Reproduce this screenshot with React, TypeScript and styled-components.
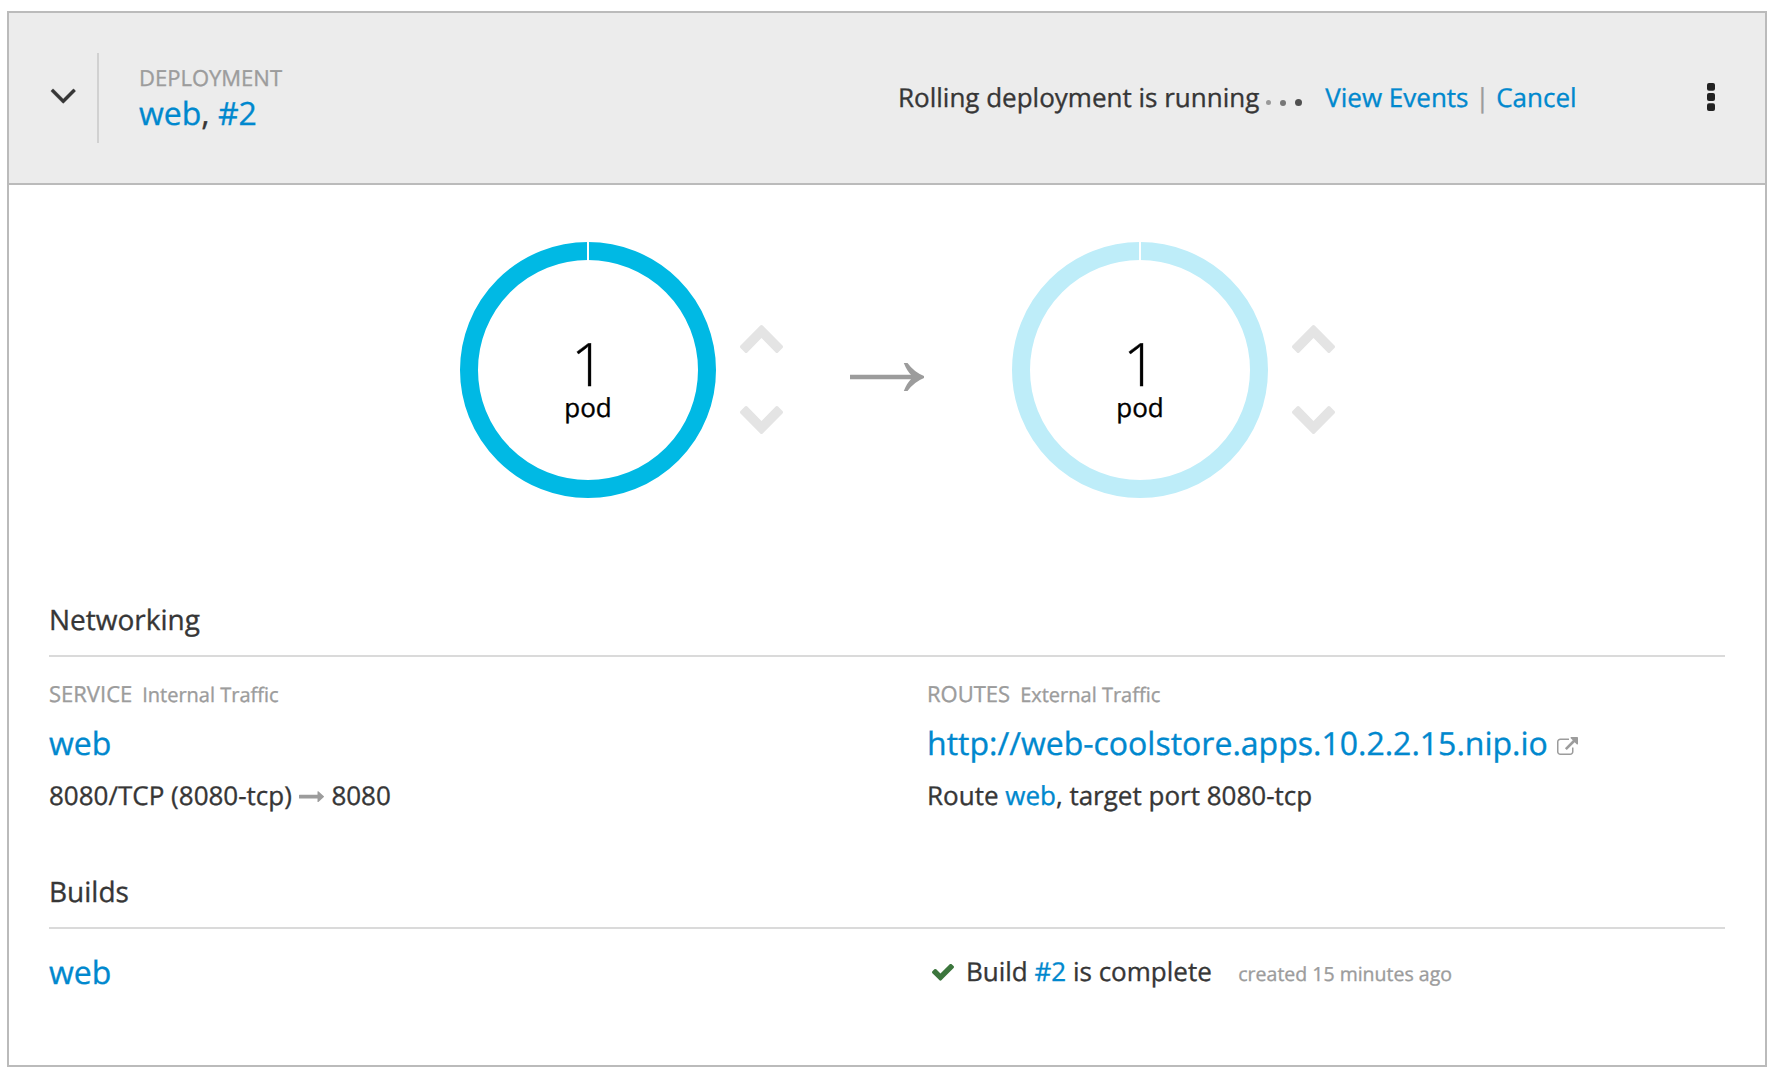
import React from "react";
import styled, { createGlobalStyle } from "styled-components";

const GlobalStyle = createGlobalStyle`
  *, *::before, *::after { box-sizing: border-box; }
  body {
    margin: 0;
    background: #fff;
    color: #363636;
    font-family: "Open Sans", "Noto Sans", sans-serif;
    font-size: 26px;
    line-height: 40px;
    text-rendering: geometricPrecision;
    -webkit-text-stroke: 0.35px currentColor;
  }
`;

const Page = styled.main`
  padding: 11px 12px 0 7px;
`;

const Card = styled.section`
  height: 1056px;
  border: 2px solid #bbb;
  box-shadow: 0 2px 0 rgba(3, 3, 3, 0.13);
`;

const Header = styled.header`
  display: grid;
  grid-template-columns: 90px 799px 1fr auto;
  align-items: center;
  height: 172px;
  padding-right: 50px;
  background: #ececec;
  border-bottom: 2px solid #bbb;
`;

const Toggle = styled.button`
  display: flex;
  align-items: center;
  justify-content: flex-end;
  height: 90px;
  padding: 0 22px 3px 0;
  border: 0;
  border-right: 2px solid #d1d1d1;
  background: none;
  color: #363636;
`;

const Title = styled.div`
  padding: 0 0 0.500px 40px;
`;

const Label = styled.div`
  font-size: 22px;
  line-height: 30px;
  color: #9c9c9c;
`;

const LabelNote = styled.span`
  margin-left: 10px;
  font-size: 20px;
`;

const Link = styled.a`
  color: #0088ce;
  text-decoration: none;
`;

const Name = styled.div`
  margin-top: 1.500px;
  font-size: 32px;
  line-height: 38px;
`;

const Status = styled.div`
  display: flex;
  align-items: center;
  padding-bottom: 2px;
  white-space: nowrap;
`;

const Dots = styled.span`
  display: flex;
  align-items: center;
  gap: 9px;
  margin: 11px 23px 0 6.500px;
`;

const Dot = styled.i<{ $size: number; $color: string }>`
  width: ${(p) => p.$size}px;
  height: ${(p) => p.$size}px;
  border-radius: 50%;
  background: ${(p) => p.$color};
`;

const Separator = styled.span`
  margin: 0 6.700px;
  color: #9c9c9c;
`;

const Kebab = styled.button`
  display: flex;
  padding: 0 0 2px;
  border: 0;
  background: none;
  color: #222;
`;

const Body = styled.div`
  padding: 57px 40px 0;
`;

const Pods = styled.div`
  display: flex;
  align-items: flex-start;
  height: 360px;
  padding-left: 411px;
`;

const Donut = styled.div`
  display: grid;
  width: 256px;
  height: 256px;

  > * {
    grid-area: 1 / 1;
  }
`;

const DonutText = styled.div`
  display: flex;
  flex-direction: column;
  align-items: center;
  padding-top: 90px;
  color: #000;
`;

const Count = styled.div`
  font-size: 60px;
  font-weight: 300;
  line-height: 62px;
`;

const Unit = styled.div`
  font-size: 26px;
  line-height: 26px;
`;

const Scaler = styled.div`
  display: flex;
  flex-direction: column;
  gap: 53px;
  margin: 83px 67.500px 0 23.500px;
  color: #e4e4e4;

  > svg {
    transform: translateZ(0);
  }
`;

const TransitionArrow = styled.svg`
  margin: 121px 88px 0 0;
`;

const SectionTitle = styled.h2`
  margin: 0;
  height: 55px;
  border-bottom: 2px solid #dadada;
  font-size: 28px;
  font-weight: 400;
  line-height: 36px;
`;

const Columns = styled.div<{ $height: number; $top: number }>`
  display: grid;
  grid-template-columns: 1fr 1fr;
  column-gap: 80px;
  height: ${(p) => p.$height}px;
  padding-top: ${(p) => p.$top}px;
  white-space: nowrap;
`;

const Target = styled.div`
  margin-top: 12px;
  font-size: 32px;
  line-height: 44px;
`;

const Detail = styled.div`
  margin-top: 9px;
  line-height: 40px;
`;

const BuildName = styled.div`
  padding-top: 1px;
  font-size: 32px;
  line-height: 44px;
`;

const BuildStatus = styled.div`
  display: flex;
  align-items: baseline;
  line-height: 42px;
`;

const Age = styled.span`
  margin-left: 26.500px;
  font-size: 19.500px;
  color: #9c9c9c;
`;

const Icon = styled.svg<{ $color?: string; $gap?: string }>`
  flex: none;
  fill: currentColor;
  color: ${(p) => p.$color ?? "inherit"};
  margin: ${(p) => p.$gap ?? "0"};
`;

const CHEVRON =
  "M1683 1331l-166 165q-19 19-45 19t-45-19l-531-531-531 531q-19 19-45 19t-45-19l-166-165q-19-19-19-45.5t19-45.5l742-741q19-19 45-19t45 19l742 741q19 19 19 45.5t-19 45.5z";

function Chevron({ down }: { down?: boolean }) {
  return (
    <Icon width="43" height="28" viewBox="90 480 1612 1035" preserveAspectRatio="none">
      <path d={CHEVRON} transform={down ? "translate(0 1995) scale(1 -1)" : undefined} />
    </Icon>
  );
}

function PodDonut({ color }: { color: string }) {
  return (
    <>
      <Donut>
        <svg width="256" height="256" viewBox="0 0 256 256">
          <circle cx="128" cy="128" r="119" fill="none" stroke={color} strokeWidth="18" />
          <path d="M128 0V19" stroke="#fff" strokeWidth="2" />
        </svg>
        <DonutText>
          <Count>1</Count>
          <Unit>pod</Unit>
        </DonutText>
      </Donut>
      <Scaler>
        <Chevron />
        <Chevron down />
      </Scaler>
    </>
  );
}

export default function App() {
  return (
    <Page>
      <GlobalStyle />
      <Card>
        <Header>
          <Toggle aria-label="Collapse">
            <Icon width="24.5" height="14.3" viewBox="397 653 998 582" overflow="visible">
              <path
                d="M1395 736q0 13-10 23l-466 466q-10 10-23 10t-23-10l-466-466q-10-10-10-23t10-23l50-50q10-10 23-10t23 10l393 393 393-393q10-10 23-10t23 10l50 50q10 10 10 23z"
                stroke="currentColor"
                strokeWidth="12"
              />
            </Icon>
          </Toggle>
          <Title>
            <Label>DEPLOYMENT</Label>
            <Name>
              <Link>web</Link>, <Link>#2</Link>
            </Name>
          </Title>
          <Status>
            <span>Rolling deployment is running</span>
            <Dots>
              <Dot $size={5.5} $color="#9a9a9a" />
              <Dot $size={6} $color="#777" />
              <Dot $size={7} $color="#505050" />
            </Dots>
            <Link>View Events</Link>
            <Separator>|</Separator>
            <Link>Cancel</Link>
          </Status>
          <Kebab aria-label="Actions">
            <Icon width="8" height="28" viewBox="0 0 8 28">
              <rect width="8" height="7.8" rx="2" />
              <rect y="10.1" width="8" height="7.8" rx="2" />
              <rect y="20.2" width="8" height="7.8" rx="2" />
            </Icon>
          </Kebab>
        </Header>
        <Body>
          <Pods>
            <PodDonut color="#00b9e4" />
            <TransitionArrow width="74" height="28" viewBox="0 0 74 28">
              <path
                d="M0 11.7H61Q57 8 53.8 0H57.5Q64 9 74 13V15Q64 19 57.5 28H53.8Q57 20 61 16.3H0Z"
                fill="#9c9c9c"
              />
            </TransitionArrow>
            <PodDonut color="#beedf9" />
          </Pods>
          <SectionTitle>Networking</SectionTitle>
          <Columns $height={217} $top={22}>
            <div>
              <Label>
                SERVICE<LabelNote>Internal Traffic</LabelNote>
              </Label>
              <Target>
                <Link>web</Link>
              </Target>
              <Detail>
                8080/TCP (8080-tcp)
                <Icon $color="#9c9c9c" $gap="0 7.5px 3px 7px" width="25" height="11.4" viewBox="0 512 1728 768">
                  <path d="M1728 893q0 14-10 24l-384 354q-16 14-35 6-19-9-19-29v-224h-1248q-14 0-23-9t-9-23v-192q0-14 9-23t23-9h1248v-224q0-21 19-29t35 5l384 350q10 10 10 23z" />
                </Icon>
                8080
              </Detail>
            </div>
            <div>
              <Label>
                ROUTES<LabelNote>External Traffic</LabelNote>
              </Label>
              <Target>
                <Link>http://web-coolstore.apps.10.2.2.15.nip.io</Link>
                <Icon $color="#9c9c9c" $gap="0 0 0 9px" width="21" height="18" viewBox="0 0 1792 1536">
                  <path d="M1408 928v320q0 119-84.500 203.500t-203.500 84.500h-832q-119 0-203.500-84.500t-84.500-203.500v-832q0-119 84.500-203.500t203.500-84.500h704q14 0 23 9t9 23v64q0 14-9 23t-23 9h-704q-66 0-113 47t-47 113v832q0 66 47 113t113 47h832q66 0 113-47t47-113v-320q0-14 9-23t23-9h64q14 0 23 9t9 23zM1792 64v512q0 26-19 45t-45 19-45-19l-176-176-652 652q-10 10-23 10t-23-10l-114-114q-10-10-10-23t10-23l652-652-176-176q-19-19-19-45t19-45 45-19h512q26 0 45 19t19 45z" />
                </Icon>
              </Target>
              <Detail>
                Route <Link>web</Link>, target port 8080-tcp
              </Detail>
            </div>
          </Columns>
          <SectionTitle>Builds</SectionTitle>
          <Columns $height={100} $top={21}>
            <BuildName>
              <Link>web</Link>
            </BuildName>
            <BuildStatus>
              <Icon $color="#3c763d" $gap="0 12px 0 5px" width="22" height="17" viewBox="121 374 1550 1148">
                <path d="M1671 566q0 40-28 68l-724 724-136 136q-28 28-68 28t-68-28l-136-136-362-362q-28-28-28-68t28-68l136-136q28-28 68-28t68 28l294 295 656-657q28-28 68-28t68 28l136 136q28 28 28 68z" />
              </Icon>
              <span>
                Build <Link>#2</Link> is complete
              </span>
              <Age>created 15 minutes ago</Age>
            </BuildStatus>
          </Columns>
        </Body>
      </Card>
    </Page>
  );
}
